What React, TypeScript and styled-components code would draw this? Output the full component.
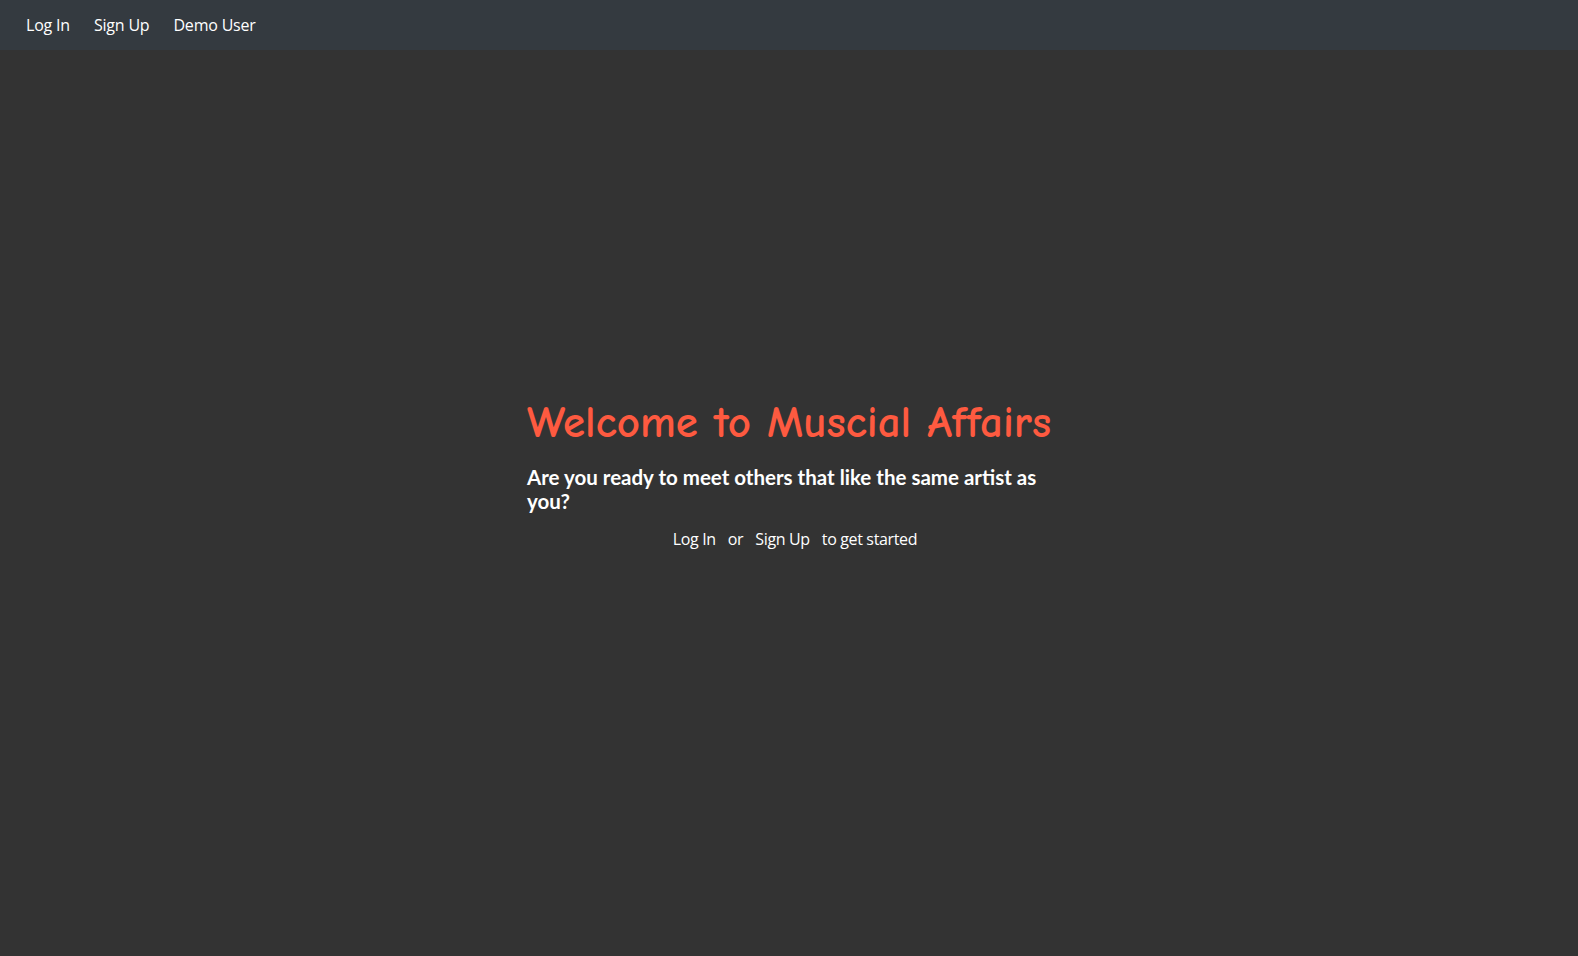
import React from "react";
import styled, { createGlobalStyle } from "styled-components";

const Global = createGlobalStyle`
  html, body {
    margin: 0;
    padding: 0;
    background: #333333;
  }
  body {
    font-family: "Segoe UI", "Open Sans", "Noto Sans", sans-serif;
    color: #ffffff;
    min-height: 100vh;
  }
`;

const Page = styled.div`
  min-height: 956px;
  display: flex;
  flex-direction: column;
  background: #333333;
`;

const NavBar = styled.nav`
  height: 50px;
  background: #343a40;
  display: flex;
  align-items: center;
  padding-left: 26px;
  gap: 24px;
`;

const NavLink = styled.a`
  color: #ffffff;
  font-size: 16px;
  letter-spacing: -0.2px;
  text-decoration: none;
  cursor: pointer;
  line-height: 24px;
`;

const Main = styled.main`
  flex: 1;
  display: flex;
  justify-content: center;
  padding-top: 346px;
`;

const Hero = styled.section`
  width: 524px;
  display: flex;
  flex-direction: column;
`;

const Title = styled.h1`
  margin: 0;
  font-family: "Comic Sans MS", "Comic Neue", "Lato", cursive;
  font-weight: 700;
  font-size: 45px;
  line-height: 52px;
  color: #fe5a40;
  text-align: center;
  white-space: nowrap;
`;

const Subtitle = styled.h4`
  margin: 17px 0 0;
  font-family: "Segoe UI", "Lato", sans-serif;
  font-size: 20.5px;
  font-weight: 700;
  line-height: 24px;
  color: #ffffff;
`;

const CallRow = styled.div`
  margin-top: 14px;
  padding-left: 12px;
  display: flex;
  justify-content: center;
  align-items: baseline;
  gap: 12px;
  font-size: 16px;
  letter-spacing: -0.35px;
  line-height: 24px;
`;

const InlineLink = styled.a`
  color: #ffffff;
  text-decoration: none;
  cursor: pointer;
`;

const Plain = styled.span`
  color: #ffffff;
`;

export default function App() {
  return (
    <Page>
      <Global />
      <NavBar>
        <NavLink>Log In</NavLink>
        <NavLink>Sign Up</NavLink>
        <NavLink>Demo User</NavLink>
      </NavBar>
      <Main>
        <Hero>
          <Title>Welcome to Muscial Affairs</Title>
          <Subtitle>Are you ready to meet others that like the same artist as you?</Subtitle>
          <CallRow>
            <InlineLink>Log In</InlineLink>
            <Plain>or</Plain>
            <InlineLink>Sign Up</InlineLink>
            <Plain>to get started</Plain>
          </CallRow>
        </Hero>
      </Main>
    </Page>
  );
}
